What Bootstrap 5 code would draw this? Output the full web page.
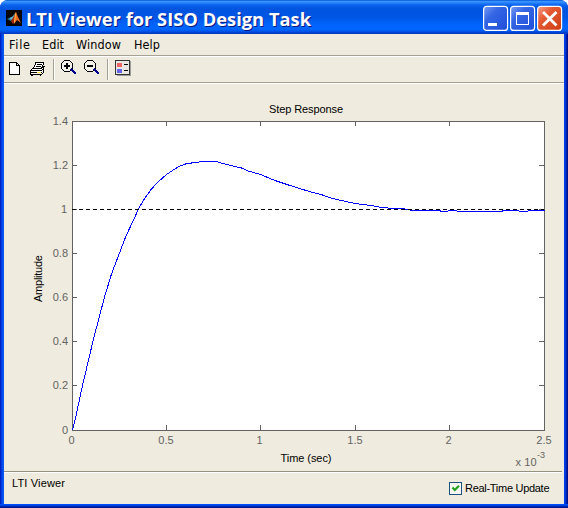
<!DOCTYPE html>
<html lang="en">
<head>
<meta charset="utf-8">
<title>LTI Viewer for SISO Design Task</title>
<link href="https://cdn.jsdelivr.net/npm/bootstrap@5.3.0/dist/css/bootstrap.min.css" rel="stylesheet">
<style>
html,body{height:100%;margin:0;overflow:hidden;background:#fff}
body{font-family:"Liberation Sans",Arial,sans-serif;color:#000}
.xp-window{width:568px;height:508px;border-radius:8px 8px 0 0;overflow:hidden;
 background:linear-gradient(90deg,#0013a5 0,#0030d8 1px,#0047f0 2px,#0a5cf5 4px,#0046f0 564px,#0030d0 566px,#00108c 567px)}
.titlebar{height:34px;padding:0 6px;background:linear-gradient(180deg,#0054d8 0,#3a93ff 1.5px,#2682ff 3px,#0a62ec 5px,#0054e0 9px,#0055e3 17px,#0061f8 23px,#0066ff 29px,#0058ec 31px,#003dca 33px,#0033b4 34px)}
.title-text{margin-left:4px;padding-top:4px}
.title-text svg{overflow:visible}
.title-text text{font:700 18.5px "Open Sans","Noto Sans",sans-serif}
.title-icon{margin-top:2px}
.win-buttons{margin-right:-1px;margin-top:2px}
.client{width:560px;height:470px;margin-left:4px;background:#efebde}
.rule-b{border-bottom:1px solid #a5a294;box-shadow:0 1px 0 #fff}
.menus{height:22px;padding-left:5px}
.tools{height:26px;margin-top:1px;padding-left:4px}
.plot{height:388px}
.statusline{height:2px;width:558px;background:linear-gradient(#94927f 50%,#fff 50%)}
.status{height:31px}
.winbottom{height:4px;background:linear-gradient(#0050ff 0,#0040e0 40%,#001898 75%,#00107c)}
.plot text,.status text{font-family:"Liberation Sans",Arial,sans-serif;font-size:11px}
.menus text{font-family:"DejaVu Sans Condensed","DejaVu Sans",sans-serif;font-size:12.500px}
.axis-num text{fill:#636363}
.plot .exponent{font-size:9px}
</style>
</head>
<body>
<div class="xp-window d-flex flex-column">
 <header class="titlebar d-flex align-items-center">
  <svg class="title-icon flex-shrink-0" width="16" height="16" viewBox="0 0 16 16">
   <path fill="#050505" d="M0 0h16v16H0z"/>
   <path fill="#2b7e9b" d="M1 9l4-2 2 1-2 3-2-1z"/><path fill="#61b7c9" d="M4 8l3-2 2-3-1 5-3 2z"/>
   <path fill="#a62a10" d="M5 11l3-5 2-4 1 3-1 6-3 3z"/><path fill="#ed6c20" d="M9 3l1-1 2 5 3 6-4-3-3 4z"/>
   <path fill="#ffc254" d="M9 4h1l-1 8-1 1z"/>
  </svg>
  <div class="title-text flex-grow-1"><svg width="288" height="30" class="d-block">
   <text fill="#0a1883" aria-hidden="true" x="1" y="23" textLength="285" lengthAdjust="spacingAndGlyphs">LTI Viewer for SISO Design Task</text>
   <text fill="#fff" x="0" y="22" textLength="285" lengthAdjust="spacingAndGlyphs">LTI Viewer for SISO Design Task</text>
  </svg></div>
  <svg width="80" height="26" viewBox="0 0 80 26" class="win-buttons flex-shrink-0">
   <defs>
    <linearGradient id="bl" x2="1" y2="1"><stop stop-color="#779df5"/><stop offset=".35" stop-color="#3566e5"/><stop offset="1" stop-color="#1d4ed8"/></linearGradient>
    <linearGradient id="rd" x2="1" y2="1"><stop stop-color="#f2a18b"/><stop offset=".35" stop-color="#e65a34"/><stop offset="1" stop-color="#cc3e12"/></linearGradient>
   </defs>
   <g stroke="#fff" stroke-width="1.200"><rect x=".6" y="1.400" width="24" height="24" rx="3" fill="url(#bl)"/><rect x="27.600" y="1.400" width="24" height="24" rx="3" fill="url(#bl)"/><rect x="54.600" y="1.400" width="24" height="24" rx="3" fill="url(#rd)"/></g>
   <path fill="#fff" d="M5 18h9v3H5z"/>
   <path fill="#fff" fill-rule="evenodd" d="M33 7h13v13H33zM34 10v9h11v-9z"/>
   <path d="M61 8l11.500 11.500M72.500 8L61 19.500" stroke="#fff" stroke-width="2.800" stroke-linecap="square"/>
  </svg>
 </header>
 <main class="client d-flex flex-column">
  <nav class="menus rule-b flex-shrink-0">
   <svg width="200" height="21" class="d-block">
    <text x="0" y="15" textLength="21">File</text><text x="33" y="15" textLength="22">Edit</text>
    <text x="67" y="15" textLength="45">Window</text><text x="125" y="15" textLength="26">Help</text>
   </svg>
  </nav>
  <div class="tools rule-b flex-shrink-0">
   <svg width="130" height="25" viewBox="8 57 130 25" class="d-block" shape-rendering="crispEdges">
    <path fill="#fff" stroke="#000" d="M9.500 62.500h7l3 3v9h-10zM16.500 62.500v3h3"/>
    <path d="M33 67h11v3H33z" fill="#fff"/>
    <path d="M35 62h9v1h-9zM35 63h1v2h-1zM34 65h1v2h-1zM33 67h1v1h-1zM43 63h1v2h-1zM42 65h1v2h-1zM41 67h1v1h-1z" fill="#000"/>
    <path d="M36 63h7v2h-1v2h-1v1h-7v-1h1v-2h1z" fill="#fff"/>
    <path d="M37 64h5v1h-5zM36 66h5v1h-5z" fill="#000"/>
    <path d="M32 68h10v1H32zM31 69h1v1h-1zM30 70h12v1H30zM30 71h1v4h-1zM31 75h2v1h-2zM33 76h8v-1h1v-1h1v-1h1v-1h1v-5h-1v-1h-1v1h-1v1h1v1h-1v1h1v3h-1v1H31v1h9v1h-7zM44 66h1v6h-1zM31 72h11v1H31z" fill="#000"/>
    <path d="M31 71h11v1H31zM31 73h6v1h-6zM32 69h9v1h-9z" fill="#fff"/>
    <path d="M37 72h4v1h-4z" fill="#ffe93a"/>
    <path d="M53.500 59v21M107.500 59v21" stroke="#a5a294"/><path d="M54.500 59v21M108.500 59v21" stroke="#fff"/>
    <g id="zoomer"><path d="M64.500 60.500h5l3 3v5l-3 3h-5l-3-3v-5z" fill="#f4f1e8" stroke="#000"/><path d="M71 69l5 5" stroke="#00008c" stroke-width="2.500"/></g>
    <path d="M64 66h6M67 63v6" stroke="#000" stroke-width="2"/>
    <use href="#zoomer" x="23"/><path d="M87 66h6" stroke="#000" stroke-width="2"/>
    <path fill="#9c9c9c" d="M117 61h14v15h-14z"/><path fill="#e8e7e4" stroke="#333" d="M115.500 60.500h14v14h-14z"/>
    <path fill="#ed6464" d="M117 63h5v4h-5z"/><path fill="#6464e8" d="M117 69h5v4h-5z"/><path stroke="#000" d="M124 64.500h4M124 70.500h4"/>
   </svg>
  </div>
  <svg class="plot d-block flex-shrink-0" width="560" height="388" viewBox="4 83 560 388">
   <path d="M4 83.500h560" stroke="#fff" shape-rendering="crispEdges"/>
   <g shape-rendering="crispEdges" fill="none">
    <rect x="72.500" y="121.500" width="472" height="309" fill="#fff" stroke="#636363"/>
    <path stroke="#636363" d="M166.500 122v4M260.500 122v4M355.500 122v4M449.500 122v4M166.500 430v-5M260.500 430v-5M355.500 430v-5M449.500 430v-5M73 165.500h4M73 209.500h4M73 253.500h4M73 297.500h4M73 341.500h4M73 385.500h4M544 165.500h-5M544 209.500h-5M544 253.500h-5M544 297.500h-5M544 341.500h-5M544 385.500h-5"/>
    <path stroke="#00f" d="M72.500 430.500L75.500 418L82.500 385.500L93 341L104.500 297L111.500 274L119.500 253L126 236L133.500 220L138.500 209L143 201L151 189.500L158 182L166.500 174.500L174 169.500L180 165.900L186.500 163.700L196 162.400L203 161.500H216L225 164L233 166L241.500 168L248 171L260 174.300L275 180.500L290 185.500L310 191.700L322 194.800L332 198.400L349 202.200L360 204.200L373 205.800L383 207.700L395 208.500H402L413 210.500H439L442 211.500H447L449 210.500H456L458 211.500H502L503 210.500H518L520 211.500H527L529 210.500H545"/>
    <path stroke="#000" stroke-dasharray="4 3" d="M72 209.500h472"/>
   </g>
   <text x="269" y="113" textLength="74">Step Response</text>
   <text x="280.500" y="462" textLength="51">Time (sec)</text>
   <text transform="translate(42 302) rotate(-90)" textLength="47">Amplitude</text>
   <g class="axis-num">
    <g text-anchor="end"><text x="68" y="125">1.4</text><text x="68" y="169">1.2</text><text x="67" y="213">1</text><text x="68" y="257">0.8</text><text x="68" y="301">0.6</text><text x="68" y="345">0.4</text><text x="68" y="389">0.2</text><text x="68" y="434">0</text></g>
    <g text-anchor="middle"><text x="71.500" y="444">0</text><text x="166" y="444">0.5</text><text x="259.500" y="444">1</text><text x="355" y="444">1.5</text><text x="448.500" y="444">2</text><text x="544" y="444">2.5</text></g>
    <text x="515.500" y="466" textLength="21">x 10</text><text class="exponent" x="537" y="458">-3</text>
   </g>
  </svg>
  <div class="statusline flex-shrink-0"></div>
  <footer class="status">
   <svg width="560" height="31" viewBox="4 473 560 31" class="d-block">
    <text x="12" y="487" textLength="53">LTI Viewer</text>
    <rect x="449.500" y="482.500" width="12" height="12" fill="#f6f6f2" stroke="#1c5180" shape-rendering="crispEdges"/>
    <path d="M452.500 487.500l2.300 2.500 4.200-4.200" fill="none" stroke="#21a121" stroke-width="2.200"/>
    <text x="465" y="492" textLength="84.500">Real-Time Update</text>
   </svg>
  </footer>
 </main>
 <div class="winbottom"></div>
</div>
<script src="https://cdn.jsdelivr.net/npm/bootstrap@5.3.0/dist/js/bootstrap.bundle.min.js"></script>
</body>
</html>
